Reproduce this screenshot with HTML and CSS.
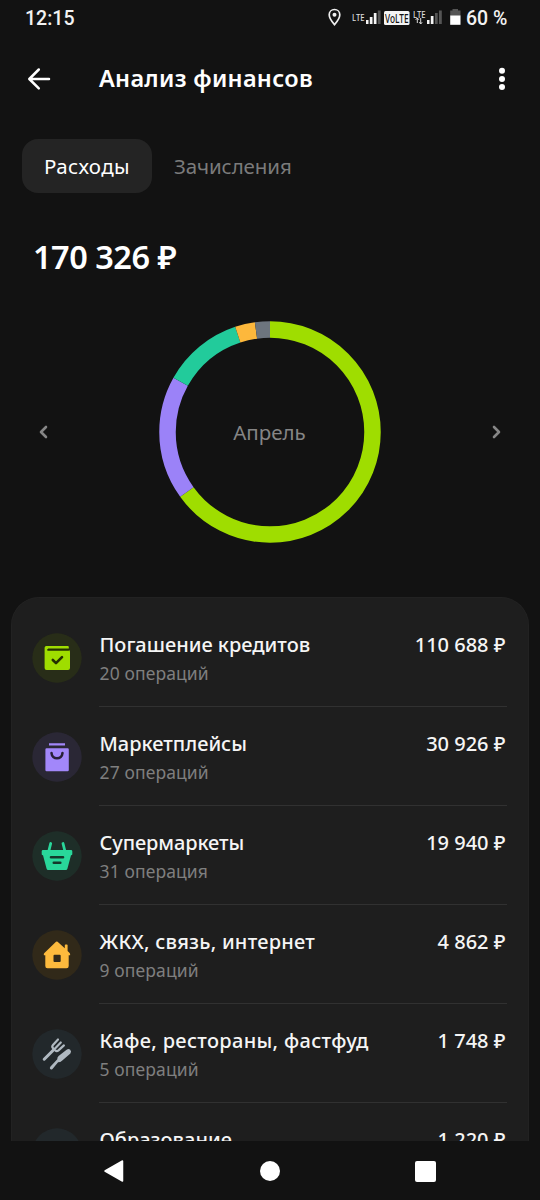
FILE: index.html
```html
<!DOCTYPE html>
<html lang="ru">
<head>
<meta charset="utf-8">
<title>Анализ финансов</title>
<link rel="stylesheet" href="styles.css">
</head>
<body>
<div class="screen">
  <div class="status">
    <span class="clock">12:15</span>
    <svg class="status-icons" width="138" height="24" viewBox="326 6 138 24">
      <path d="M334.500 9.500c-3 0-5.300 2.300-5.300 5.200 0 3.900 5.300 9.900 5.300 9.900s5.300-6 5.300-9.900c0-2.900-2.300-5.200-5.300-5.200z" fill="none" stroke="#eee" stroke-width="1.700"/>
      <circle cx="334.500" cy="14.800" r="2" fill="#eee"/>
      <text x="352" y="20.500" class="tiny" textLength="12.500" lengthAdjust="spacingAndGlyphs">LTE</text>
      <path d="M366 20h2.500v4H366zM369.800 17h2.700v7h-2.700zM373.800 13h2.700v11h-2.700z" fill="#f4f4f4"/>
      <path d="M377.800 10.500h2.800V24h-2.800z" fill="#555"/>
      <rect x="384" y="11" width="25.500" height="14" rx="1.500" fill="#f4f4f4"/>
      <text x="385" y="22.800" class="volte" textLength="23.500" lengthAdjust="spacingAndGlyphs">VoLTE</text>
      <text x="413" y="17.600" class="tiny" textLength="12.500" lengthAdjust="spacingAndGlyphs">LTE</text>
      <path d="M417.300 23v-5m-1.600 1.800 1.600-1.800 1.600 1.800M420.700 18V24m-1.500-1.800 1.500 1.800 1.500-1.800" fill="none" stroke="#ddd" stroke-width="1"/>
      <path d="M427 20h2.500v4H427zM430.800 16h2.700v8h-2.700z" fill="#f4f4f4"/>
      <path d="M435 13h2.700v11H435zM439 10.500h2.800V24H439z" fill="#555"/>
      <path d="M452.500 9h5.500v1.500h2.500V16h-10.300v-5.500h2.300z" fill="#555"/>
      <rect x="450.200" y="15.500" width="10.300" height="9.300" fill="#fff"/>
    </svg>
    <span class="battery">60 %</span>
  </div>

  <div class="header">
    <svg width="24" height="24" viewBox="0 0 24 24"><path d="M22 12H2.500M11.800 2.500 2.300 12l9.500 9.300" class="line"/></svg>
    <span class="title">Анализ финансов</span>
    <svg class="more" width="8" height="24" viewBox="0 0 8 24" fill="#fff"><circle cx="4" cy="3.700" r="3"/><circle cx="4" cy="12" r="3"/><circle cx="4" cy="20.100" r="3"/></svg>
  </div>

  <div class="tabs">
    <span class="tab active">Расходы</span>
    <span class="tab">Зачисления</span>
  </div>

  <div class="total">170 326 ₽</div>

  <div class="chart">
    <svg width="12" height="18" viewBox="0 0 12 18"><path d="M9 4 4 9l5 5" class="chev"/></svg>
    <div class="donut">
      <svg width="224" height="224" viewBox="0 0 224 224">
        <g transform="rotate(-90 112 112)" fill="none" stroke-width="16.500">
          <circle cx="112" cy="112" r="102.500" stroke="#9fdd00" pathLength="100" stroke-dasharray="65.050 100"/>
          <circle cx="112" cy="112" r="102.500" stroke="#9b82f8" pathLength="100" stroke-dasharray="18.100 100" stroke-dashoffset="-65.050"/>
          <circle cx="112" cy="112" r="102.500" stroke="#22cb9b" pathLength="100" stroke-dasharray="11.750 100" stroke-dashoffset="-83.150"/>
          <circle cx="112" cy="112" r="102.500" stroke="#fdb83c" pathLength="100" stroke-dasharray="2.900 100" stroke-dashoffset="-94.900"/>
          <circle cx="112" cy="112" r="102.500" stroke="#6d757e" pathLength="100" stroke-dasharray="2.200 100" stroke-dashoffset="-97.800"/>
        </g>
      </svg>
      <span class="month">Апрель</span>
    </div>
    <svg width="12" height="18" viewBox="0 0 12 18"><path d="m4 4 5 5-5 5" class="chev"/></svg>
  </div>

  <div class="panel">
    <div class="row">
      <svg class="ico loan" viewBox="0 0 50 50"><circle class="bg" cx="25" cy="25" r="24.700"/>
        <path class="fg" d="M14.300 13h21.500q1 0 1 1v1.500H16v1.300h20q2 0 2 2V35q0 2-2 2H14.600q-2 0-2-2V14.800q0-1.800 1.700-1.800z"/><path class="cut slot" d="M16 16.800h20.500"/><path class="cut" d="m20.800 27 3.200 3.200 6-6"/></svg>
      <div class="body"><div class="info"><span class="name">Погашение кредитов</span><span class="sub">20 операций</span></div><span class="sum">110 688 ₽</span></div>
    </div>
    <div class="row">
      <svg class="ico market" viewBox="0 0 50 50"><circle class="bg" cx="25" cy="25" r="24.700"/>
        <path class="fg" d="M17 11.300h16v2.300H17zM14.600 16.300h21q1.200 0 1.200 1.200V38q0 1.200-1.200 1.200h-21q-1.200 0-1.200-1.200V17.500q0-1.200 1.200-1.200z"/><path class="cut" d="M19.500 21c.5 7 10.500 7 11 0"/></svg>
      <div class="body"><div class="info"><span class="name">Маркетплейсы</span><span class="sub">27 операций</span></div><span class="sum">30 926 ₽</span></div>
    </div>
    <div class="row">
      <svg class="ico shop" viewBox="0 0 50 50"><circle class="bg" cx="25" cy="25" r="24.700"/>
        <path class="handle" d="m18.700 12.500-2 8M31 12.500l2 8"/><path class="fg" d="M11 19h28q1.300 0 1.300 1.200v3q0 1-1.300 1l-3.600 13.500q-.4 1.300-1.500 1.300H16.100q-1.200 0-1.500-1.300L11 24.200q-1.300 0-1.300-1v-3Q9.700 19 11 19z"/><path class="cut" d="M19 26.200h12M21.800 31.700h6.500"/></svg>
      <div class="body"><div class="info"><span class="name n3">Супермаркеты</span><span class="sub">31 операция</span></div><span class="sum">19 940 ₽</span></div>
    </div>
    <div class="row">
      <svg class="ico home" viewBox="0 0 50 50"><circle class="bg" cx="25" cy="25" r="24.700"/>
        <path class="fg" fill-rule="evenodd" d="M24 11.800q.8-.7 1.600 0l7.200 6.500v-3q0-.8.800-.8h1.200q.8 0 .8.800v5.800l2 1.800q.8.900.5 2.300h-1.400V36q0 2.200-2.200 2.200H15.500q-2.200 0-2.200-2.200V25.200h-1.400q-.5-1.400.5-2.300zM22.500 24.800q-1 0-1 1v5.200q0 1 1 1h5.200q1 0 1-1v-5.200q0-1-1-1z"/></svg>
      <div class="body"><div class="info"><span class="name n4">ЖКХ, связь, интернет</span><span class="sub">9 операций</span></div><span class="sum">4 862 ₽</span></div>
    </div>
    <div class="row">
      <svg class="ico cafe" viewBox="0 0 50 50"><circle class="bg" cx="25" cy="25" r="24.700"/>
        <path class="tines" d="m12.200 30.200 9.500-9.500"/><path class="prongs" d="m26 10.500-5 5.400q-1.500 1.800.1 3.400l2 2q1.600 1.600 3.400.1l5.400-5M28.800 13.500l-5.500 5.800"/>
        <path class="fg" d="M34.600 20.800q2-1.600 3.600 0 1.600 1.700.2 3.600L30 31.800q-1.600 1.500-3.900 1.500l-5.600 6.600q-1.400 1-2.300.2-.8-1 .1-2.300l7-7.500q-.2-1.800 1.300-3.200z"/></svg>
      <div class="body"><div class="info"><span class="name n5">Кафе, рестораны, фастфуд</span><span class="sub">5 операций</span></div><span class="sum">1 748 ₽</span></div>
    </div>
    <div class="row">
      <svg class="ico cafe" viewBox="0 0 50 50"><circle class="bg" cx="25" cy="25" r="24.700"/></svg>
      <div class="body"><div class="info"><span class="name">Образование</span></div><span class="sum">1 220 ₽</span></div>
    </div>
  </div>

  <div class="navbar">
    <svg width="22" height="24" viewBox="0 0 22 24"><path d="M3 12 20.500 2v20z" class="nav-back"/></svg>
    <span class="nav-home"></span>
    <span class="nav-recent"></span>
  </div>
</div>
</body>
</html>
```
FILE: styles.css
```css
body { margin: 0; background: #121212; }
.screen {
  width: 540px; height: 1200px; overflow: hidden;
  display: flex; flex-direction: column;
  background: #121212; color: #fff;
  font-family: "Noto Sans", "Open Sans", sans-serif;
  white-space: nowrap;
}
.status { height: 36px; flex: none; display: flex; align-items: center; padding-left: 25px; font: 500 19.500px/36px Roboto, sans-serif; }
.clock { width: 301px; }
.clock, .battery { color: #f2f2f2; padding-top: 2px; line-height: 34px; }
.battery { margin-left: 2px; }
.tiny { font: 500 8.500px "Noto Sans", sans-serif; fill: #ddd; }
.volte { font: 500 13px "Noto Sans", sans-serif; fill: #121212; }
.header { height: 85px; flex: none; display: flex; align-items: center; padding: 0 34px 0 27px; }
.line { fill: none; stroke: #fff; stroke-width: 2.500; stroke-linecap: round; stroke-linejoin: round; }
.title { margin: -2px 0 0 48px; font-size: 23.500px; font-weight: 600; letter-spacing: .3px; }
.more { margin-left: auto; }
.tabs { height: 54px; flex: none; margin: 18px 0 0 22px; display: flex; }
.tab { height: 54px; line-height: 55px; padding: 0 22px; border-radius: 16px; font-size: 20.500px; letter-spacing: -.08px; color: #7b7b7b; }
.active { background: #242424; color: #fff; letter-spacing: .35px; }
.total { height: 60px; line-height: 60px; flex: none; margin: 34px 0 0 33px; font-size: 32.500px; font-weight: 600; letter-spacing: -.5px; }
.chart { height: 224px; flex: none; margin: 32.500px 38px 0 37px; display: flex; align-items: center; justify-content: space-between; }
.chev { fill: none; stroke: #868686; stroke-width: 2.600; stroke-linecap: round; stroke-linejoin: round; }
.donut { width: 224px; height: 224px; display: grid; place-items: center; }
.donut > * { grid-area: 1 / 1; }
.month { font-size: 20.500px; color: #858585; }
.panel { height: 544px; flex: none; box-sizing: border-box; margin: 53.500px 11px 0; padding: 10px 21px 0; overflow: hidden; border: 1px solid #222; border-bottom: 0; border-radius: 28px 28px 0 0; background: #1e1e1e; }
.row { height: 99px; display: flex; gap: 17px; }
.ico { width: 50px; height: 50px; flex: none; margin: 24.500px 0 0 -1px; }
.body { flex: 1; height: 98px; border-bottom: 1.500px solid #313131; display: flex; justify-content: space-between; }
.info { display: flex; flex-direction: column; padding: 22px 0 0 .5px; }
.name, .sum { font-size: 20px; line-height: 30px; font-weight: 500; color: #f5f5f5; }
.n3 { letter-spacing: -.1px; }
.n4 { letter-spacing: .25px; }
.n5 { letter-spacing: .34px; }
.sum { margin: 22px 1.500px 0 0; }
.sub { font-size: 17.500px; line-height: 27px; letter-spacing: .12px; color: #7f7f7f; }
.name, .sub { align-self: flex-start; }
.cut { fill: none; stroke-width: 2.600; stroke-linecap: round; stroke-linejoin: round; }
.cut.slot { stroke-width: 1.800; }
.loan .bg { fill: #282d18; } .loan .fg { fill: #9fdd00; } .loan .cut { stroke: #243000; }
.market .bg { fill: #2a2735; } .market .fg { fill: #a287fa; } .market .cut { stroke: #282138; }
.shop .bg { fill: #1e2e28; } .shop .fg { fill: #29d79a; } .shop .cut { stroke: #14382b; }
.handle { fill: none; stroke: #29d79a; stroke-width: 2.800; stroke-linecap: round; }
.home .bg { fill: #312919; } .home .fg { fill: #fdba3d; }
.cafe .bg { fill: #22282b; } .cafe .fg { fill: #b0b9c1; }
.tines { stroke: #b0b9c1; stroke-width: 3; stroke-linecap: round; }
.prongs { fill: none; stroke: #b0b9c1; stroke-width: 2.200; stroke-linecap: round; }
.navbar { flex: 1; display: flex; align-items: center; padding: 1px 0 0 102px; }
.nav-back { fill: #fff; stroke: #fff; stroke-width: 1.500; stroke-linejoin: round; }
.nav-home { width: 20px; height: 20px; border-radius: 50%; background: #fff; margin-left: 136px; }
.nav-recent { width: 21px; height: 21px; border-radius: 2px; background: #fff; margin-left: 135px; }
```
